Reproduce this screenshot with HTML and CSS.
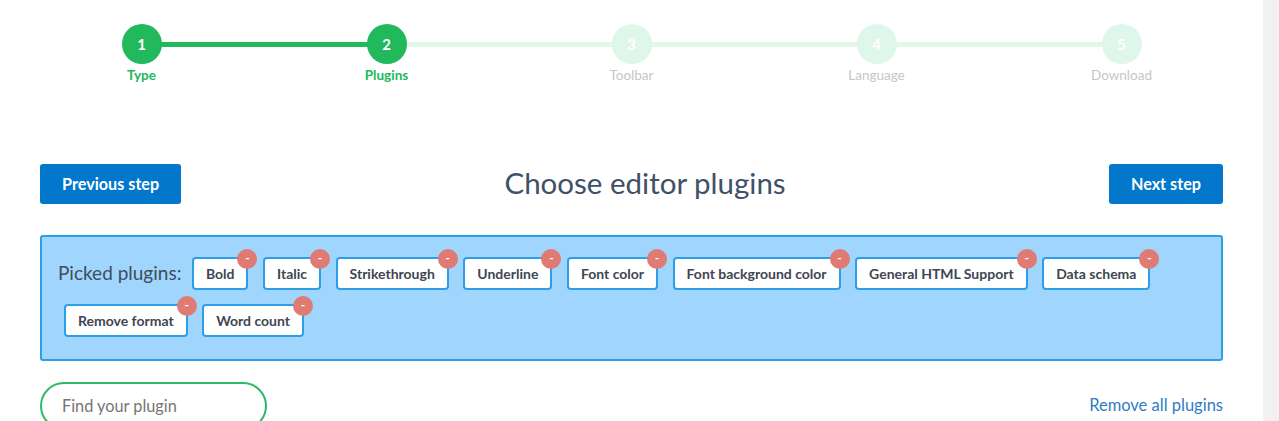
FILE: index.html
```html
<!DOCTYPE html>
<html lang="en">
<head>
<meta charset="utf-8">
<title>Choose editor plugins</title>
<link rel="stylesheet" href="styles.css">
</head>
<body>
<div class="page">
  <main class="main">
    <ol class="stepper">
      <li class="step done link-done"><span class="dot">1</span><span class="label">Type</span></li>
      <li class="step done"><span class="dot">2</span><span class="label">Plugins</span></li>
      <li class="step"><span class="dot">3</span><span class="label">Toolbar</span></li>
      <li class="step"><span class="dot">4</span><span class="label">Language</span></li>
      <li class="step last"><span class="dot">5</span><span class="label">Download</span></li>
    </ol>

    <div class="container">
      <div class="header">
        <button class="btn">Previous step</button>
        <h1 class="title">Choose editor plugins</h1>
        <button class="btn">Next step</button>
      </div>

      <div class="picked">
        <span class="picked-label">Picked plugins:</span>
        <span class="chip">Bold<span class="badge">-</span></span>
        <span class="chip">Italic<span class="badge">-</span></span>
        <span class="chip">Strikethrough<span class="badge">-</span></span>
        <span class="chip">Underline<span class="badge">-</span></span>
        <span class="chip">Font color<span class="badge">-</span></span>
        <span class="chip">Font background color<span class="badge">-</span></span>
        <span class="chip">General HTML Support<span class="badge">-</span></span>
        <span class="chip">Data schema<span class="badge">-</span></span>
        <span class="chip">Remove format<span class="badge">-</span></span>
        <span class="chip">Word count<span class="badge">-</span></span>
      </div>

      <div class="search-row">
        <input class="search" type="text" placeholder="Find your plugin">
        <a class="remove-all" href="#">Remove all plugins</a>
      </div>
    </div>
  </main>
  <div class="scroll-gutter"></div>
</div>
</body>
</html>
```

FILE: styles.css
```css
* { box-sizing: border-box; }
html, body { margin: 0; padding: 0; height: 100%; overflow: hidden; }
body {
  font-family: "Lato", "Noto Sans", sans-serif;
  background: #fff;
  color: #3e4d5c;
}
.page { display: flex; height: 100vh; }
.main { flex: 1; min-width: 0; }
.scroll-gutter { width: 16px; background: #f1f1f1; flex: none; }

/* stepper */
.stepper {
  list-style: none;
  margin: 24px 0 0;
  padding: 0 19px;
  display: flex;
}
.step {
  flex: 1;
  display: flex;
  flex-direction: column;
  align-items: center;
  position: relative;
}
.step::after {
  content: "";
  position: absolute;
  top: 18px;
  left: 50%;
  width: 100%;
  height: 5px;
  background: #e0f7ea;
  z-index: 0;
}
.step.link-done::after { background: #22b85c; }
.step.last::after { display: none; }
.dot {
  position: relative;
  z-index: 1;
  width: 40px;
  height: 40px;
  border-radius: 50%;
  background: #dff7ea;
  color: #fff;
  font-weight: 700;
  font-size: 15px;
  display: flex;
  align-items: center;
  justify-content: center;
}
.step.done .dot { background: #22b85c; }
.label {
  margin-top: 4px;
  font-size: 13.5px;
  line-height: 15px;
  color: #c6c6c6;
}
.step.done .label { color: #22b85c; font-weight: 700; }

/* container */
.container { padding: 0 40px; }
.header {
  margin-top: 81px;
  display: flex;
  justify-content: space-between;
  align-items: center;
}
.btn {
  font-family: inherit;
  height: 40px;
  padding: 0 22px 2px;
  border: none;
  border-radius: 3px;
  background: #0277cc;
  color: #fff;
  font-size: 16.2px;
  font-weight: 700;
}
.title {
  margin: 0;
  padding-bottom: 4px;
  font-size: 29.5px;
  font-weight: 400;
  color: #3e5166;
}

/* picked */
.picked {
  margin-top: 31px;
  background: #a0d6fd;
  border: 2px solid #2d9fe9;
  border-radius: 3px;
  padding: 20px 16px 22px;
  display: flex;
  flex-wrap: wrap;
  align-items: center;
  row-gap: 14px;
  column-gap: 8.5px;
}
.picked-label {
  font-size: 19px;
  color: #3e4d5c;
  margin-right: -4px;
  padding-bottom: 2px;
}
.chip {
  position: relative;
  margin-left: 6px;
  height: 33px;
  padding: 0 12px 1px;
  display: inline-flex;
  align-items: center;
  background: #fff;
  border: 2px solid #2d9ee8;
  border-radius: 4px;
  font-size: 14px;
  font-weight: 700;
  color: #3e4651;
}
.badge {
  position: absolute;
  top: -10px;
  right: -11px;
  width: 20px;
  height: 20px;
  border-radius: 50%;
  background: #e07b74;
  color: #fff;
  font-size: 12px;
  line-height: 18px;
  text-align: center;
  font-weight: 700;
}

/* search */
.search-row {
  margin-top: 21px;
  display: flex;
  justify-content: space-between;
  align-items: center;
}
.search {
  width: 227px;
  height: 48px;
  border: 2px solid #2fb865;
  border-radius: 24px;
  padding: 0 20px 2px;
  font-family: inherit;
  font-size: 16.3px;
  color: #555;
  outline: none;
}
.search::placeholder { color: #767676; }
.remove-all {
  color: #2f7cc4;
  font-size: 16.5px;
  text-decoration: none;
  padding-bottom: 2px;
}
```
